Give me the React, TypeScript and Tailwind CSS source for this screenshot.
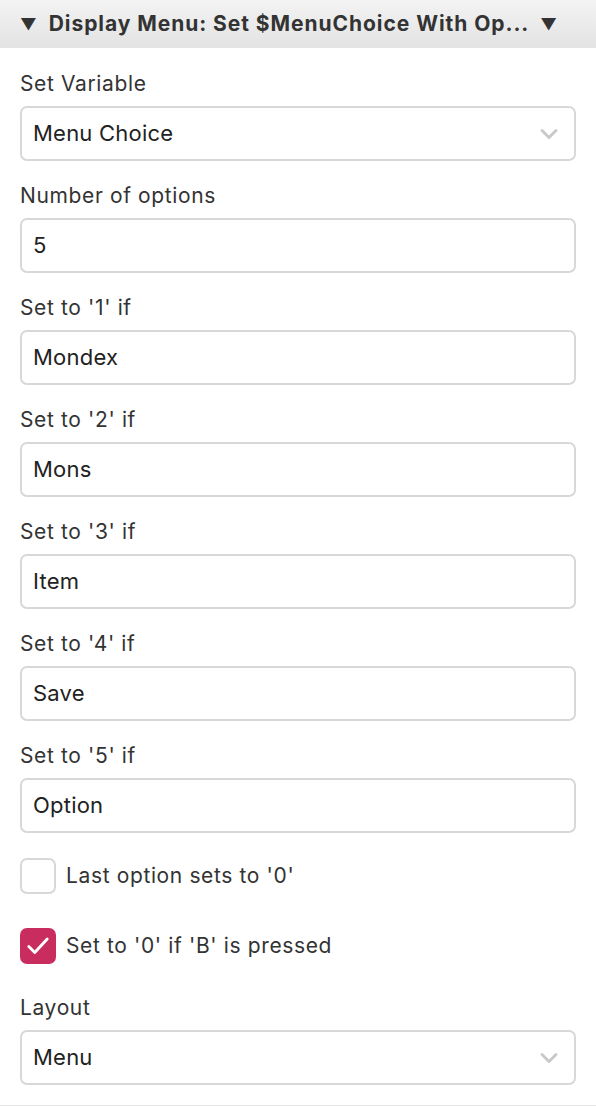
import { ChevronDown } from "lucide-react";

const FIELDS = [
  { label: "Set to '1' if", value: "Mondex" },
  { label: "Set to '2' if", value: "Mons" },
  { label: "Set to '3' if", value: "Item" },
  { label: "Set to '4' if", value: "Save" },
  { label: "Set to '5' if", value: "Option" },
];

function Label({ children }: { children: React.ReactNode }) {
  return (
    <p className="mb-[10px] text-[21px] leading-[24px] tracking-[0.03em] text-[#333]">{children}</p>
  );
}

function Box({ children }: { children: React.ReactNode }) {
  return (
    <div className="flex h-[55px] items-center rounded-[7px] border-2 border-[#d8d8d8] bg-white px-[11px] text-[22px] tracking-[0.01em] text-[#222]">
      {children}
    </div>
  );
}

function Select({ value }: { value: string }) {
  return (
    <Box>
      <span className="flex-1">{value}</span>
      <ChevronDown className="h-7 w-7 text-[#c9c9c9]" strokeWidth={2.5} />
    </Box>
  );
}

function Checkbox({ checked, label }: { checked: boolean; label: string }) {
  return (
    <div className="flex items-center gap-[10px]">
      {checked ? (
        <div className="flex h-[36px] w-[36px] items-center justify-center rounded-[7px] bg-[#c92d5f]">
          <svg width="26" height="26" viewBox="0 0 24 24" fill="none" stroke="white" strokeWidth="2.6"
            strokeLinecap="round" strokeLinejoin="round">
            <path d="M3.5 12.5l5.5 5.5L20.5 5.5" />
          </svg>
        </div>
      ) : (
        <div className="h-[36px] w-[36px] rounded-[7px] border-2 border-[#d8d8d8] bg-white" />
      )}
      <span className="text-[21px] tracking-[0.03em] text-[#333]">{label}</span>
    </div>
  );
}

export default function App() {
  return (
    <div className="h-[1106px] w-[596px] overflow-hidden border-b border-[#e6e6e6] bg-white"
      style={{ fontFamily: "Inter, 'Noto Sans', sans-serif" }}>

      {/* Header */}
      <div className="flex h-[48px] items-center bg-gradient-to-b from-[#f3f3f3] to-[#e3e3e3] pl-[20px] pr-[38px] text-[21px] font-bold tracking-[0.045em] text-[#333]">
        <span className="mr-[11px] text-[16px]">▼</span>
        <span className="flex-1 truncate">Display Menu: Set $MenuChoice With Op...</span>
        <span className="text-[16px]">▼</span>
      </div>

      <div className="flex flex-col gap-[23px] px-[20px] pt-[24px]">
        <div>
          <Label>Set Variable</Label>
          <Select value="Menu Choice" />
        </div>
        <div>
          <Label>Number of options</Label>
          <Box>5</Box>
        </div>
        {FIELDS.map((f) => (
          <div key={f.label}>
            <Label>{f.label}</Label>
            <Box>{f.value}</Box>
          </div>
        ))}

        <div className="flex flex-col gap-[34px] pt-[2px]">
          <Checkbox checked={false} label="Last option sets to '0'" />
          <Checkbox checked={true} label="Set to '0' if 'B' is pressed" />
        </div>

        <div className="pt-[9px]">
          <Label>Layout</Label>
          <Select value="Menu" />
        </div>
      </div>
    </div>
  );
}
